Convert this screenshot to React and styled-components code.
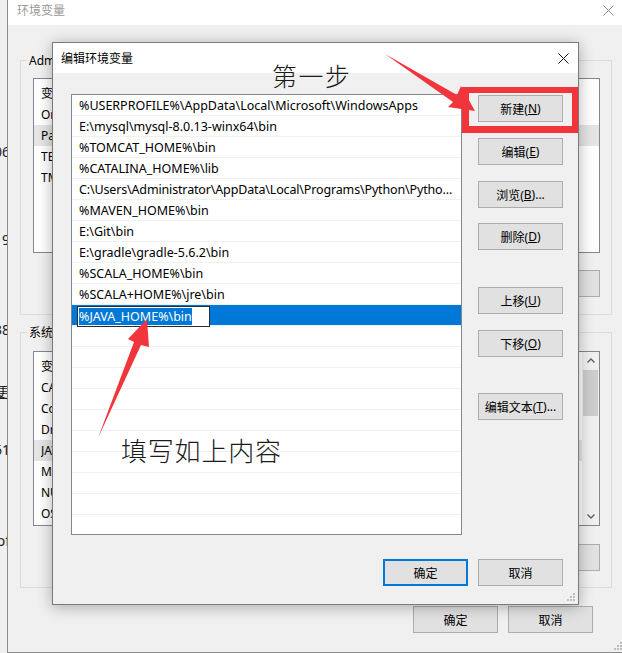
import React from 'react';
import styled, { createGlobalStyle } from 'styled-components';

const UI_FONT = `"Noto Sans", "Noto Sans CJK SC", sans-serif`;

const GlobalStyle = createGlobalStyle`
  *, *::before, *::after { box-sizing: border-box; }
  html, body { margin: 0; padding: 0; background: #f0f0f0; overflow: hidden; }
  body { font-family: ${UI_FONT}; font-size: 12px; color: #000; }
`;

const Desktop = styled.div`
  position: relative;
  width: 622px;
  height: 653px;
  overflow: hidden;
  display: flex;
  background: #f0f0f0;
`;

const BehindStrip = styled.div`
  width: 7px;
  flex: none;
  overflow: hidden;
  display: flex;
  flex-direction: column;
  align-items: flex-end;
  background: #f0f0f0;
`;

const BehindText = styled.span`
  margin-top: ${p => p.$mt}px;
  margin-right: -3px;
  white-space: nowrap;
  font-size: 14px;
  line-height: 20px;
  color: #222;
  text-decoration: ${p => (p.$u ? 'underline' : 'none')};
`;

const BgWindow = styled.div`
  width: 617px;
  flex: none;
  height: 653px;
  border-left: 1px solid #8a8a8a;
  border-bottom: 1px solid #8a8a8a;
  background: #f0f0f0;
  display: flex;
  flex-direction: column;
  position: relative;
`;

const BgTitleBar = styled.div`
  height: 25px;
  flex: none;
  background: #fff;
  display: flex;
  align-items: center;
  justify-content: space-between;
  padding: 0 10px 5px 9px;
  color: #9a9a9a;
`;

const BgBody = styled.div`
  padding: 27px 12px 0 12px;
  display: flex;
  flex-direction: column;
`;

const GroupBox = styled.fieldset`
  margin: ${p => p.$mt}px 0 0;
  padding: ${p => p.$pt}px 11px ${p => p.$pb}px 12px;
  border: 1px solid #dcdcdc;
  min-width: 0;
`;

const GroupLegend = styled.legend`
  padding: 0 2px;
  margin-left: -6px;
  line-height: 17px;
  font-size: 12px;
  white-space: nowrap;
`;

const BgList = styled.div`
  height: 175px;
  border: 1px solid #828790;
  background: #fff;
  display: flex;
  overflow: hidden;
`;

const BgListBody = styled.div`
  flex: 1;
  min-width: 0;
  display: flex;
  flex-direction: column;
`;

const BgHeader = styled.div`
  height: 25px;
  flex: none;
  display: flex;
  align-items: center;
  padding: 2px 0 0 7px;
`;

const BgRow = styled.div`
  height: 21px;
  flex: none;
  display: flex;
  align-items: center;
  padding-left: 7px;
  white-space: nowrap;
  background: ${p => (p.$selected ? '#e5e5e5' : 'transparent')};
`;

const NameCell = styled.span`
  width: 150px;
  overflow: hidden;
`;

const ScrollTrack = styled.div`
  width: 17px;
  flex: none;
  background: #f0f0f0;
  display: flex;
  flex-direction: column;
  align-items: center;
`;

const ScrollArrow = styled.div`
  width: 17px;
  height: 17px;
  flex: none;
  display: flex;
  align-items: center;
  justify-content: center;
  margin-top: ${p => (p.$bottom ? 'auto' : '0')};
`;

const ScrollThumb = styled.div`
  width: 15px;
  height: 46px;
  margin-top: 1px;
  background: #cdcdcd;
`;

const ButtonRow = styled.div`
  display: flex;
  justify-content: flex-end;
  gap: 10px;
  margin-top: ${p => p.$mt}px;
  padding-right: ${p => p.$pr || 0}px;
`;

const WinButton = styled.button`
  width: 85px;
  height: 27px;
  flex: none;
  margin: ${p => p.$mt || 0}px 0 0;
  padding: 0;
  font-family: ${UI_FONT};
  font-size: 12px;
  color: #000;
  background: #e1e1e1;
  border: ${p => (p.$default ? '2px solid #0078d7' : '1px solid #adadad')};
  display: flex;
  align-items: center;
  justify-content: center;
  white-space: nowrap;
`;

const Mnemonic = styled.span`
  text-decoration: underline;
  text-underline-offset: 1px;
`;

const Dialog = styled.div`
  position: absolute;
  left: 52px;
  top: 42px;
  width: 527px;
  height: 563px;
  background: #f0f0f0;
  border: 1px solid #7a7a7a;
  box-shadow: 0 2px 14px rgba(0, 0, 0, 0.3);
  display: flex;
  flex-direction: column;
`;

const DialogTitleBar = styled.div`
  height: 30px;
  flex: none;
  background: #fff;
  display: flex;
  align-items: center;
  justify-content: space-between;
  padding: 0 9px 0 8px;
`;

const DialogBody = styled.div`
  display: grid;
  grid-template-columns: 391px 85px;
  column-gap: 16px;
  padding: 21px 15px 0 18px;
`;

const PathList = styled.div`
  height: 441px;
  border: 1px solid #828790;
  background: #fff;
  overflow: hidden;
`;

const PathRow = styled.div`
  height: 21px;
  border-bottom: 1px solid #f0f0f0;
  display: flex;
  align-items: flex-start;
  padding-left: ${p => (p.$selected ? 5 : 7)}px;
  padding-top: ${p => (p.$selected ? 0 : 1)}px;
  font-size: 12.5px;
  letter-spacing: ${p => (p.$tight ? -0.15 : 0)}px;
  line-height: 20px;
  white-space: nowrap;
  overflow: ${p => (p.$selected ? 'visible' : 'hidden')};
  background: ${p => (p.$selected ? '#0078d7' : 'transparent')};
  position: relative;
`;

const EditBox = styled.div`
  width: 133px;
  height: 21px;
  margin-top: 1px;
  border: 1px solid #2b2b2b;
  background: #fff;
  padding: 1px;
  display: flex;
`;

const Selection = styled.span`
  background: #0078d7;
  color: #fff;
  line-height: 17px;
  height: 17px;
`;

const ButtonColumn = styled.div`
  display: flex;
  flex-direction: column;
  padding-top: 1px;
`;

const DialogFooter = styled.div`
  grid-column: 1 / -1;
  display: flex;
  justify-content: flex-end;
  gap: 10px;
  margin-top: 24px;
`;

const Grip = styled.svg`
  position: absolute;
  right: ${p => p.$r}px;
  bottom: ${p => p.$b}px;
`;

const Overlay = styled.svg`
  position: absolute;
  left: 0;
  top: 0;
  pointer-events: none;
`;

const HighlightBox = styled.div`
  position: absolute;
  left: 462px;
  top: 87px;
  width: 116px;
  height: 46px;
  border-style: solid;
  border-color: #f2343b;
  border-width: 6px 6px 7px 7px;
  pointer-events: none;
`;

const Note = styled.span`
  position: absolute;
  left: ${p => p.$x}px;
  top: ${p => p.$y}px;
  font-family: "Noto Sans CJK SC", sans-serif;
  font-weight: 300;
  font-size: ${p => p.$size}px;
  letter-spacing: ${p => p.$ls || 0}px;
  line-height: 1;
  color: #1b1b1b;
  white-space: nowrap;
`;

const CloseIcon = ({ color }) => (
  <svg width="11" height="11" viewBox="0 0 11 11">
    <path d="M0.5 0.5 L10.5 10.5 M10.5 0.5 L0.5 10.5" stroke={color} strokeWidth="1" fill="none" />
  </svg>
);

const Chevron = ({ up }) => (
  <svg width="8" height="5" viewBox="0 0 8 5">
    <path d={up ? 'M0.5 4.5 L4 1 L7.5 4.5' : 'M0.5 0.5 L4 4 L7.5 0.5'} stroke="#606060" strokeWidth="1.4" fill="none" />
  </svg>
);

const GripDots = ({ r, b }) => (
  <Grip $r={r} $b={b} width="10" height="10" viewBox="0 0 10 10">
    {[[8, 2], [5, 5], [8, 5], [2, 8], [5, 8], [8, 8]].map(([x, y]) => (
      <rect key={`${x}-${y}`} x={x - 1} y={y - 1} width="2" height="2" fill="#bdbdbd" />
    ))}
  </Grip>
);

const pathEntries = [
  '%USERPROFILE%\\AppData\\Local\\Microsoft\\WindowsApps',
  'E:\\mysql\\mysql-8.0.13-winx64\\bin',
  '%TOMCAT_HOME%\\bin',
  '%CATALINA_HOME%\\lib',
  'C:\\Users\\Administrator\\AppData\\Local\\Programs\\Python\\Pytho...',
  '%MAVEN_HOME%\\bin',
  'E:\\Git\\bin',
  'E:\\gradle\\gradle-5.6.2\\bin',
  '%SCALA_HOME%\\bin',
  '%SCALA+HOME%\\jre\\bin',
];

const userVars = ['OneDrive', 'Path', 'TEMP', 'TMP'];
const sysVars = ['CATALINA_HOME', 'ComSpec', 'DriverData', 'JAVA_HOME', 'MAVEN_HOME', 'NUMBER_OF_PROCESSORS', 'OS'];

const Btn = ({ label, m, suffix = '', ...rest }) => (
  <WinButton {...rest}>
    {label}
    {m ? (
      <>
        (<Mnemonic>{m}</Mnemonic>){suffix}
      </>
    ) : null}
  </WinButton>
);

export default function App() {
  const emptyRows = Array.from({ length: 10 });
  return (
    <>
      <GlobalStyle />
      <Desktop>
        <BehindStrip>
          <BehindText $mt={142}>1906</BehindText>
          <BehindText $mt={68}>2019</BehindText>
          <BehindText $mt={70}>1638</BehindText>
          <BehindText $mt={42} $u>变更</BehindText>
          <BehindText $mt={38}>3461</BehindText>
          <BehindText $mt={71}>Prof</BehindText>
        </BehindStrip>

        <BgWindow>
          <BgTitleBar>
            <span>环境变量</span>
            <CloseIcon color="#8f8f8f" />
          </BgTitleBar>
          <BgBody>
            <GroupBox $mt={0} $pt={9} $pb={17}>
              <GroupLegend>Administrator 的用户变量(U)</GroupLegend>
              <BgList>
                <BgListBody>
                  <BgHeader>
                    <NameCell>变量</NameCell>
                    <span>值</span>
                  </BgHeader>
                  {userVars.map(v => (
                    <BgRow key={v} $selected={v === 'Path'}>
                      <NameCell>{v}</NameCell>
                    </BgRow>
                  ))}
                </BgListBody>
              </BgList>
              <ButtonRow $mt={17}>
                <Btn label="新建" m="N" suffix="..." />
                <Btn label="编辑" m="E" suffix="..." />
                <Btn label="删除" m="D" />
              </ButtonRow>
            </GroupBox>

            <GroupBox $mt={9} $pt={10} $pb={16}>
              <GroupLegend>系统变量(S)</GroupLegend>
              <BgList>
                <BgListBody>
                  <BgHeader>
                    <NameCell>变量</NameCell>
                    <span>值</span>
                  </BgHeader>
                  {sysVars.map(v => (
                    <BgRow key={v} $selected={v === 'JAVA_HOME'}>
                      <NameCell>{v}</NameCell>
                    </BgRow>
                  ))}
                </BgListBody>
                <ScrollTrack>
                  <ScrollArrow>
                    <Chevron up />
                  </ScrollArrow>
                  <ScrollThumb />
                  <ScrollArrow $bottom>
                    <Chevron />
                  </ScrollArrow>
                </ScrollTrack>
              </BgList>
              <ButtonRow $mt={18}>
                <Btn label="新建" m="W" suffix="..." />
                <Btn label="编辑" m="I" suffix="..." />
                <Btn label="删除" m="L" />
              </ButtonRow>
            </GroupBox>

            <ButtonRow $mt={18} $pr={19}>
              <WinButton>确定</WinButton>
              <WinButton>取消</WinButton>
            </ButtonRow>
          </BgBody>
          <GripDots r={1} b={1} />
        </BgWindow>

        <Dialog>
          <DialogTitleBar>
            <span>编辑环境变量</span>
            <CloseIcon color="#111" />
          </DialogTitleBar>
          <DialogBody>
            <PathList>
              {pathEntries.map(p => (
                <PathRow key={p} $tight={p.endsWith('...')}>{p}</PathRow>
              ))}
              <PathRow $selected>
                <EditBox>
                  <Selection>%JAVA_HOME%\bin</Selection>
                </EditBox>
              </PathRow>
              {emptyRows.map((_, i) => (
                <PathRow key={`e${i}`} />
              ))}
            </PathList>
            <ButtonColumn>
              <Btn label="新建" m="N" />
              <Btn label="编辑" m="E" $mt={16} />
              <Btn label="浏览" m="B" suffix="..." $mt={16} />
              <Btn label="删除" m="D" $mt={15} />
              <Btn label="上移" m="U" $mt={37} />
              <Btn label="下移" m="O" $mt={16} />
              <Btn label="编辑文本" m="T" suffix="..." $mt={36} />
            </ButtonColumn>
            <DialogFooter>
              <WinButton $default>确定</WinButton>
              <WinButton>取消</WinButton>
            </DialogFooter>
          </DialogBody>
          <GripDots r={2} b={2} />
        </Dialog>

        <HighlightBox />
        <Overlay width="622" height="653" viewBox="0 0 622 653">
          <polygon points="385,54 457,95 461,86 475,111 448,107 453,102" fill="#f0363c" />
          <polygon points="98,438 134,342 128,339 147,319 149,347 141,345" fill="#f0363c" />
        </Overlay>
        <Note $x={272} $y={63} $size={25} $ls={1.5}>第一步</Note>
        <Note $x={121} $y={437} $size={26} $ls={0.8}>填写如上内容</Note>
      </Desktop>
    </>
  );
}
